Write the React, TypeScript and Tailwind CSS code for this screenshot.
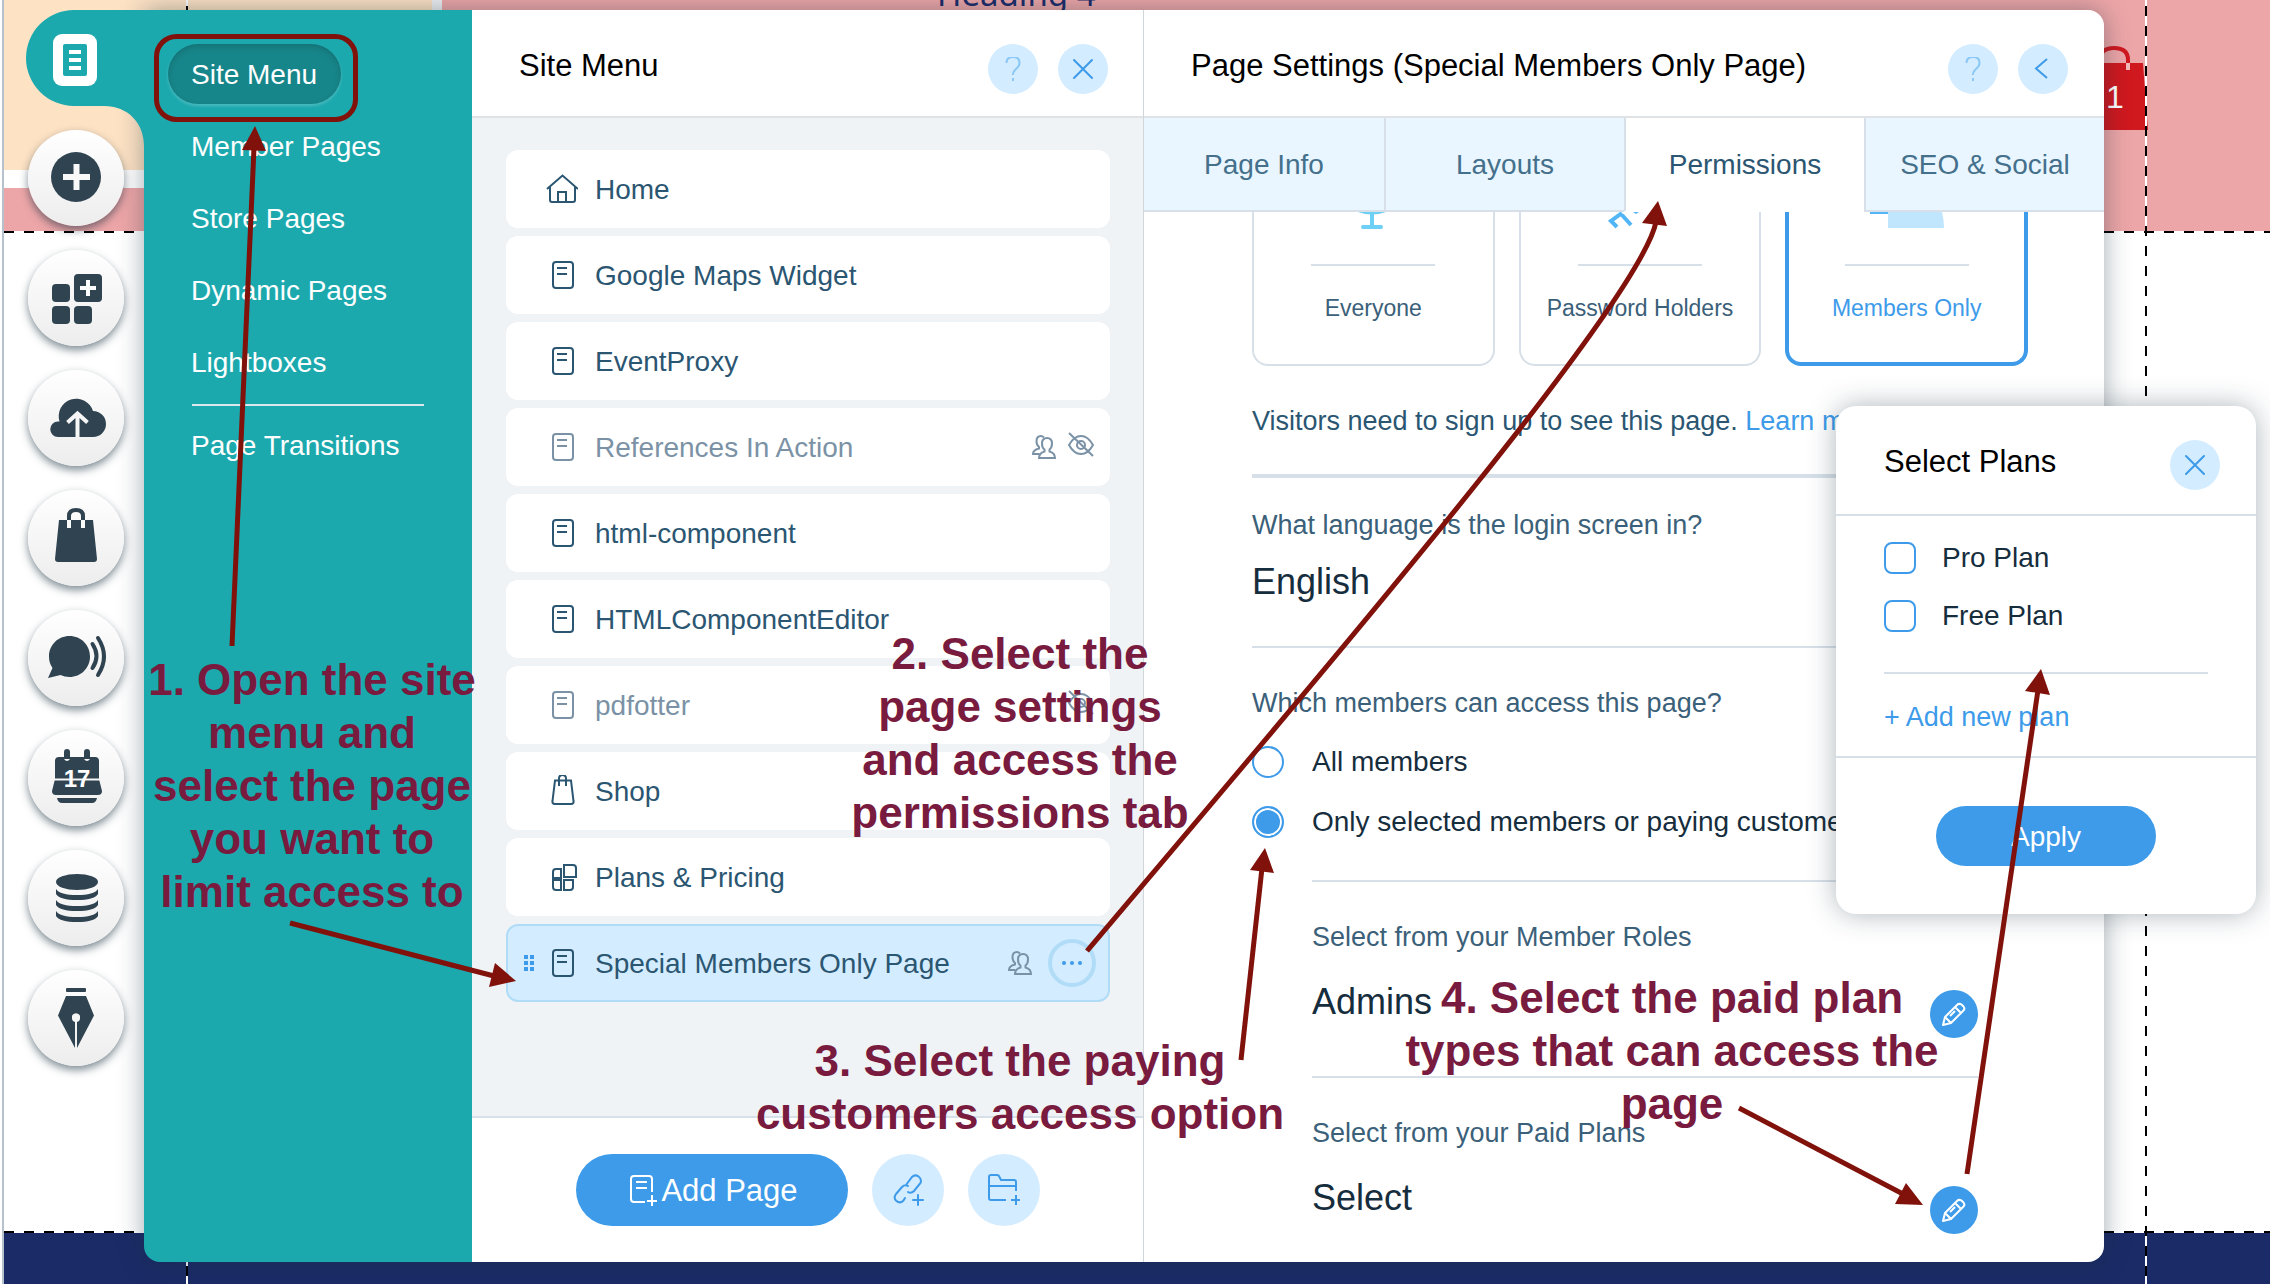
import type { ReactNode } from 'react'
import clsx from 'clsx'

const MENU = ['Site Menu', 'Member Pages', 'Store Pages', 'Dynamic Pages', 'Lightboxes']

type IconName = 'home' | 'page' | 'bag' | 'apps'

interface PageItem {
  title: string
  icon: IconName
  members?: boolean
  hidden?: boolean
  selected?: boolean
}

const PAGES: PageItem[] = [
  { title: 'Home', icon: 'home' },
  { title: 'Google Maps Widget', icon: 'page' },
  { title: 'EventProxy', icon: 'page' },
  { title: 'References In Action', icon: 'page', members: true, hidden: true },
  { title: 'html-component', icon: 'page' },
  { title: 'HTMLComponentEditor', icon: 'page' },
  { title: 'pdfotter', icon: 'page', hidden: true },
  { title: 'Shop', icon: 'bag' },
  { title: 'Plans & Pricing', icon: 'apps' },
  { title: 'Special Members Only Page', icon: 'page', members: true, selected: true },
]

const TABS = ['Page Info', 'Layouts', 'Permissions', 'SEO & Social']

/* ---------- icons ---------- */

const RAIL: { label: string; icon: ReactNode }[] = [
  {
    label: 'Add',
    icon: (
      <>
        <circle cx="48" cy="47" r="25" />
        <path d="M48.5 34v26M35 47h27" stroke="#f8f8f8" strokeWidth="6" />
      </>
    ),
  },
  {
    label: 'Apps',
    icon: (
      <>
        <rect x="24" y="34" width="18" height="18" rx="4" />
        <rect x="46" y="24" width="28" height="28" rx="4" />
        <rect x="24" y="56" width="18" height="18" rx="4" />
        <rect x="46" y="56" width="18" height="18" rx="4" />
        <path d="M60 30v16M52 38h16" stroke="#fff" strokeWidth="4" />
      </>
    ),
  },
  {
    label: 'Media',
    icon: (
      <>
        <path d="M30 67a7.500 7.500 0 0 1 0-15.500h1.500a17.500 17.500 0 1 1 33.500-10.500a13 13 0 0 1 0 26z" />
        <path d="M49.500 67V45M39.500 52.500l10-9 10 9" fill="none" stroke="#f6f6f6" strokeWidth="4" />
      </>
    ),
  },
  {
    label: 'Store',
    icon: (
      <>
        <path d="M31 30h34l4 39q0 3-3 3H30q-3 0-3-3z" />
        <path d="M41 30v-4q0-6 7-6t7 6v4" fill="none" stroke="#2f4351" strokeWidth="4" />
        <path d="M41 30v8M55 30v8" stroke="#fafafa" strokeWidth="4" />
      </>
    ),
  },
  {
    label: 'Chat',
    icon: (
      <>
        <path d="M41.500 26C53 26 62 35 62 46.500S53 67 41.500 67q-5 0-9-2L20 68l4.500-10A20 20 0 0 1 21 46.500C21 35 30 26 41.500 26z" />
        <path d="M64.500 34q8 12 0 24M70 28q12 18.500 0 37" fill="none" stroke="#2f4351" strokeWidth="4" strokeLinecap="round" />
      </>
    ),
  },
  {
    label: 'Events',
    icon: (
      <>
        <path d="M31 27h36q4 0 4 4v18l3 12q0 4-4 4H28q-4 0-4-4l3-12V31q0-4 4-4z" />
        <path d="M29 68h40q-1 5-5 5H34q-4 0-5-5z" />
        <path d="M39 22v5M59 22v5" stroke="#2f4351" strokeWidth="6" strokeLinecap="round" />
        <path d="M36 29q3 4 6 0zM56 29q3 4 6 0z" fill="#f8f8f8" />
        <path d="M26 49.500h46" stroke="#f6f6f6" strokeWidth="2" />
        <text x="49" y="57" textAnchor="middle" fontSize="24" fontWeight="700" fill="#fff">17</text>
      </>
    ),
  },
  {
    label: 'Database',
    icon: (
      <>
        <ellipse cx="49" cy="32" rx="21" ry="8" />
        <path d="M28 39q4 6 21 6t21-6v5q-4 6-21 6t-21-6z" />
        <path d="M28 50q4 6 21 6t21-6v5q-4 6-21 6t-21-6z" />
        <path d="M28 61q4 6 21 6t21-6v5q-4 6-21 6t-21-6z" />
      </>
    ),
  },
  {
    label: 'Blog',
    icon: (
      <>
        <rect x="38" y="18" width="20" height="4" rx="1" />
        <path d="M38 26h20l8 19.500L49 78V51a4 4 0 1 0-2 0v27L30 45.500z" />
        <circle cx="48" cy="48" r="4" fill="#f6f6f6" />
      </>
    ),
  },
]

function PageIcon({ name }: { name: IconName }) {
  return (
    <svg viewBox="0 0 32 32" className="size-8" fill="none" stroke="currentColor" strokeWidth="2" aria-hidden="true">
      {name === 'home' && <path d="M1 16 16.500 2.500 32 16M4 14v13q0 2 2 2h21q2 0 2-2V14M12 29V19h8v10" />}
      {name === 'page' && (
        <>
          <rect x="7" y="3" width="20" height="26" rx="3" />
          <path d="M11 9h10M11 15h10" />
        </>
      )}
      {name === 'bag' && (
        <path d="M9 5.500h16l2.500 20.500q.500 3-2.500 3H9q-3 0-2.500-3zM13 11V3.500q0-3.500 3.500-3.500T20 3.500V11" />
      )}
      {name === 'apps' && (
        <path d="M18 4h9q3 0 3 3v9H18zM7 17V11q0-3 3-3h5v9zM7 19h8v10h-5q-3 0-3-3zM18 19h9v7q0 3-3 3h-6z" />
      )}
    </svg>
  )
}

function MembersIcon() {
  return (
    <svg viewBox="0 0 24 24" className="size-6" fill="none" stroke="currentColor" strokeWidth="2" aria-label="Members only">
      <path d="M12.500 14.500C10 13 10 11 10 8.500 10 5 12 3 15 3s5 2 5 5.500c0 2.500-.500 4.500-2.500 6v2c3.500 1 5.500 2.500 5.500 6.500H7c0-4 2-5.500 5.500-6.500z" />
      <path d="M12 2.500C10.500 1 9.500 1 9 1 6 1 4.500 3 4.500 6c0 2.500.500 4.500 2.500 6v1.500C3 14.500 1 16 1 19h6.500" />
    </svg>
  )
}

function HiddenIcon() {
  return (
    <svg viewBox="0 0 26 26" className="size-[26px]" fill="none" stroke="currentColor" strokeWidth="2" aria-label="Hidden page">
      <path d="M1 13q5-9 12-9t12 9q-5 9-12 9T1 13z" />
      <circle cx="13" cy="13" r="4" />
      <path d="M1 1l24 23" />
    </svg>
  )
}

function PencilIcon() {
  return (
    <svg viewBox="0 0 24 24" className="size-6" fill="none" stroke="currentColor" strokeWidth="2" strokeLinejoin="round" aria-hidden="true">
      <path d="M1 23l2-8L15 3q2-2 4.500-.500l2 2Q23.500 7 21 9L9 21zM3 15l6 6M13 5l6 6M8 14l5-5" />
    </svg>
  )
}

function RoundButton({ kind }: { kind: 'help' | 'close' | 'back' }) {
  const label = { help: 'Help', close: 'Close', back: 'Back' }[kind]
  return (
    <button
      aria-label={label}
      className={clsx(
        'flex size-[50px] shrink-0 items-center justify-center rounded-full bg-[#d3ecff]',
        kind === 'help' ? 'text-[#8bc8f6]' : 'text-[#3d9be9]',
      )}
    >
      <svg viewBox="0 0 24 24" className="size-6" fill="none" stroke="currentColor" strokeWidth="2" aria-hidden="true">
        {kind === 'help' && <path d="M5.500 6Q5.500 0 12 0t6.500 6q0 3-3.500 6t-3 6M12 21v3" />}
        {kind === 'close' && <path d="M3 3l18 18M21 3L3 21" strokeLinecap="round" />}
        {kind === 'back' && <path d="M16 2L5 11.500l11 9.500" />}
      </svg>
    </button>
  )
}

/* ---------- site behind the panels ---------- */

function SiteCanvas() {
  return (
    <div className="absolute inset-0 flex flex-col overflow-hidden border-l-2 border-white bg-white" aria-hidden="true">
      <div className="flex h-[231px] bg-[#eda6a8]">
        <div className="flex w-[430px] flex-col">
          <div className="h-[170px] bg-[#fde2c4]" />
          <div className="h-[18px] bg-white" />
        </div>
        <div className="w-[10px] bg-[#eef0f2]" />
        <p className="pl-[495px] font-['Noto_Sans','Open_Sans',sans-serif] text-[33px] leading-[44px] text-[#1b2a68] -mt-[28px]">
          Heading 4
        </p>
      </div>
      <div className="h-[2px] bg-[repeating-linear-gradient(90deg,transparent_0_2px,#000_2px_12px,transparent_12px_20px)]" />
      <div className="flex-1" />
      <div className="h-[2px] bg-[repeating-linear-gradient(90deg,transparent_0_2px,#000_2px_12px,transparent_12px_20px)]" />
      <div className="h-[51px] bg-[#1b2b67]" />
      <div className="absolute inset-y-0 left-0 w-[2px] bg-[#b6c1cc]" />
      <div className="absolute inset-y-0 left-[184px] w-[2px] bg-[repeating-linear-gradient(180deg,#fff_0_6px,#000_6px_16px,#fff_16px_20px)]" />
      <svg viewBox="0 0 60 90" className="absolute right-[122px] top-[44px] h-[90px] w-[60px]">
        <path d="M9 19h46l5 67H0z" fill="#d0181f" />
        <path d="M12 24V16Q12 4 26 4t14 12v3" fill="none" stroke="#d0181f" strokeWidth="4" />
        <path d="M40 19v7" stroke="#f3b9ba" strokeWidth="4" />
        <text x="18" y="64" fontSize="32" fill="#fff">1</text>
      </svg>
      <div className="absolute inset-y-0 right-[123px] w-[2px] bg-[repeating-linear-gradient(180deg,#fff_0_6px,#000_6px_16px,#fff_16px_20px)]" />
    </div>
  )
}

/* ---------- tool rail ---------- */

function ToolRail() {
  return (
    <nav className="relative z-10 flex w-[144px] shrink-0 flex-col gap-6" aria-label="Editor tools">
      <button className="ml-[26px] h-24" aria-label="Menus and pages">
        <svg viewBox="0 0 118 96" className="h-24 w-full overflow-visible">
          <path d="M118 0H48a48 48 0 0 0 0 96h30c24 0 40 17 40 40z" fill="#1ca9ae" />
          <rect x="27" y="24" width="44" height="52" rx="9" fill="#fff" />
          <rect x="37" y="34" width="24" height="32" rx="2" fill="#1ca9ae" />
          <path d="M43 42h12M43 50h12M43 58h12" stroke="#fff" strokeWidth="4" />
        </svg>
      </button>
      {RAIL.map((tool) => (
        <button
          key={tool.label}
          aria-label={tool.label}
          className="ml-[28px] size-24 rounded-full bg-linear-to-b from-white to-[#ededed] shadow-[0_4px_8px_rgba(22,45,61,0.55)]"
        >
          <svg viewBox="0 0 96 96" className="size-24 fill-[#2f4351]">{tool.icon}</svg>
        </button>
      ))}
    </nav>
  )
}

/* ---------- left menu ---------- */

function SideMenu() {
  return (
    <nav className="flex w-[328px] shrink-0 flex-col gap-3 rounded-bl-2xl bg-[#1ca9ae] px-6 pt-[34px] text-[28px] text-white">
      {MENU.map((item, i) => (
        <button
          key={item}
          className={clsx(
            'h-[60px] self-start rounded-full pl-[23px] pr-6 pt-[2px] whitespace-nowrap',
            i === 0 && 'bg-[#17868a] shadow-[inset_0_3px_6px_rgba(0,0,0,0.15),0_2px_3px_rgba(255,255,255,0.2)]',
          )}
        >
          {item}
        </button>
      ))}
      <hr className="mx-6 border-t-2 border-[#dbe9ee]" />
      <button className="-mt-[2px] h-[60px] self-start pl-[23px] pr-6 whitespace-nowrap">Page Transitions</button>
    </nav>
  )
}

/* ---------- page list ---------- */

function PageRow({ page }: { page: PageItem }) {
  return (
    <li
      className={clsx(
        'flex h-[78px] items-center rounded-xl border-2 pr-3',
        page.selected ? 'border-[#b0dcf7] bg-[#d3ecff]' : 'border-white bg-white',
        page.hidden ? 'text-[#7b92a6]' : 'text-[#2b5672]',
      )}
    >
      <span className="flex w-[38px] justify-center pl-1">
        {page.selected && (
          <svg viewBox="0 0 10 16" className="h-4 w-[10px] fill-[#3d9be9]" aria-hidden="true">
            <path d="M0 0h4v4H0zM6 0h4v4H6zM0 6h4v4H0zM6 6h4v4H6zM0 12h4v4H0zM6 12h4v4H6z" />
          </svg>
        )}
      </span>
      <button className="flex flex-1 items-center gap-[17px] text-left text-[28px] whitespace-nowrap">
        <PageIcon name={page.icon} />
        <span className="pt-[2px]">{page.title}</span>
      </button>
      <span className={clsx('flex items-center', page.selected ? 'gap-4' : 'gap-3', 'text-[#7b92a6]')}>
        {page.members && <MembersIcon />}
        {page.hidden && <span className="pb-1 pr-[2px]"><HiddenIcon /></span>}
        {page.selected && (
          <button aria-label="More actions" className="flex size-12 items-center justify-center rounded-full border-4 border-[#b0dcf7]">
            <svg viewBox="0 0 20 4" className="h-1 w-5 fill-[#3d9be9]">
              <circle cx="2" cy="2" r="2" />
              <circle cx="10" cy="2" r="2" />
              <circle cx="18" cy="2" r="2" />
            </svg>
          </button>
        )}
      </span>
    </li>
  )
}

function SiteMenuPanel() {
  return (
    <section className="flex w-[671px] shrink-0 flex-col bg-white">
      <header className="flex h-[108px] items-start gap-5 border-b-2 border-[#dfe3e6] pl-[47px] pr-[35px] pt-[34px]">
        <h2 className="flex-1 text-[31px] leading-[44px] text-black">Site Menu</h2>
        <RoundButton kind="help" />
        <RoundButton kind="close" />
      </header>
      <ul className="flex flex-1 flex-col gap-2 bg-[#eff3f6] pl-[34px] pr-[33px] pt-8">
        {PAGES.map((page) => (
          <PageRow key={page.title} page={page} />
        ))}
      </ul>
      <footer className="flex h-[146px] items-center justify-center gap-6 border-t-2 border-[#d7e0e8]">
        <button className="flex h-[72px] w-[272px] items-center justify-center gap-1 rounded-full bg-[#3d9be9] pl-1 pt-[2px] text-[31px] text-white">
          <svg viewBox="0 0 28 32" className="h-8 w-7" fill="none" stroke="currentColor" strokeWidth="2" aria-hidden="true">
            <path d="M23 17V4q0-3-3-3H5Q2 1 2 4v20q0 3 3 3h11M7 7h11M7 13h11M23 20v11M18 26h10" />
          </svg>
          Add Page
        </button>
        <button aria-label="Add link" className="flex size-[72px] items-center justify-center rounded-full bg-[#d3ecff] text-[#3d9be9]">
          <svg viewBox="0 0 32 32" className="size-8" fill="none" stroke="currentColor" strokeWidth="2" strokeLinecap="round">
            <path d="M14 11l6-8q3-3 6.500-.500T28.500 9L22 17q-3 3-6 1M16 12q-3-2-6 1L4 20q-3 4 .500 7t7-.500L13 24" />
            <path d="M26 21v10M21 26h10" />
          </svg>
        </button>
        <button aria-label="Add folder" className="flex size-[72px] items-center justify-center rounded-full bg-[#d3ecff] text-[#3d9be9]">
          <svg viewBox="0 0 32 32" className="size-8" fill="none" stroke="currentColor" strokeWidth="2">
            <path d="M28 17V8q0-2-2-2H13l-2-4Q10 1 9 1H3Q1 1 1 3v21q0 2 2 2h15M1 12h27M28 21v10M23 26h10" />
          </svg>
        </button>
      </footer>
    </section>
  )
}

/* ---------- page settings ---------- */

function AccessCard({ label, active, children }: { label: string; active?: boolean; children: ReactNode }) {
  return (
    <button
      className={clsx(
        'flex h-[154px] flex-col items-center justify-start rounded-b-2xl text-[23px] leading-7',
        active ? 'border-x-4 border-b-4 border-[#3d9be9] text-[#3d9be9]' : 'border-x-2 border-b-2 border-[#d7e0e8] text-[#3b6079]',
      )}
    >
      <svg viewBox="0 0 90 17" className="h-[17px] w-[90px]" aria-hidden="true">{children}</svg>
      <span className="mt-[35px] h-[2px] w-[124px] bg-[#d7e0e8]" />
      <span className="mt-7 whitespace-nowrap">{label}</span>
    </button>
  )
}

function ValueRow({ label, value }: { label: string; value: string }) {
  return (
    <>
      <p className="mt-[39px] text-[27px] leading-8 text-[#3b6079]">{label}</p>
      <div className="mt-[27px] flex h-[58px] justify-between">
        <span className="text-[36px] leading-[44px] text-[#162d3d]">{value}</span>
        <button aria-label={`Edit: ${label}`} className="flex size-12 items-center justify-center self-end rounded-full bg-[#3d9be9] text-white">
          <PencilIcon />
        </button>
      </div>
    </>
  )
}

function Radio({ label, checked }: { label: string; checked?: boolean }) {
  return (
    <label className="flex h-8 items-center gap-7 text-[28px] whitespace-nowrap text-[#162d3d]">
      <input
        type="radio"
        name="access"
        defaultChecked={checked}
        className="size-8 shrink-0 appearance-none rounded-full border-2 border-[#3d9be9] bg-white checked:bg-[#3d9be9] checked:shadow-[inset_0_0_0_2px_#fff]"
      />
      {label}
    </label>
  )
}

function SettingsPanel() {
  return (
    <section className="flex min-w-0 flex-1 flex-col overflow-hidden rounded-r-2xl border-l border-[#d0d6da] bg-white">
      <header className="flex h-[108px] items-start gap-5 border-b-2 border-[#dfe3e6] pl-[47px] pr-9 pt-[34px]">
        <h2 className="flex-1 text-[31px] leading-[44px] whitespace-nowrap text-black">Page Settings (Special Members Only Page)</h2>
        <RoundButton kind="help" />
        <RoundButton kind="back" />
      </header>
      <div className="grid grid-cols-4" role="tablist">
        {TABS.map((tab, i) => {
          const active = tab === 'Permissions'
          return (
            <button
              key={tab}
              role="tab"
              aria-selected={active}
              className={clsx(
                'h-[94px] border-b-2 pt-[2px] text-[28px] whitespace-nowrap',
                active ? 'border-b-white bg-white text-[#2b5672]' : 'border-b-[#d7e0e8] bg-[#e9f6ff] text-[#44708c]',
                i > 0 && 'border-l-2 border-l-[#d7e0e8]',
              )}
            >
              {tab}
            </button>
          )
        })}
      </div>

      <div className="pb-7 pl-[108px] pr-[126px]">
        <div className="-mr-[50px] grid grid-cols-3 gap-6">
          <AccessCard label="Everyone">
            <path d="M30 0q14 5 28 0z" fill="#6fd0f6" />
            <path d="M44 0v15M35 15h18" stroke="#6fd0f6" strokeWidth="4" strokeLinecap="round" />
          </AccessCard>
          <AccessCard label="Password Holders">
            <path d="M22 15l-6-6L27 1M27 3l9 10" fill="none" stroke="#52b6f6" strokeWidth="4" />
            <path d="M38 0h6l-3 2z" fill="#52b6f6" />
          </AccessCard>
          <AccessCard label="Members Only" active>
            <path d="M8 0h20v2H8z" fill="#52b6f6" />
            <path d="M26 0h54q2 8 2 16H26z" fill="#bfe6fd" />
          </AccessCard>
        </div>
        <p className="mt-[39px] text-[27px] leading-8 whitespace-nowrap text-[#2b5672]">
          Visitors need to sign up to see this page. <a href="#learn" className="text-[#3d9be9]">Learn more</a>
        </p>
        <hr className="mt-[37px] border-t-4 border-[#d7e0e8]" />

        <label htmlFor="language" className="mt-[31px] block text-[27px] leading-8 text-[#3b6079]">
          What language is the login screen in?
        </label>
        <select id="language" className="mt-[19px] block h-[44px] w-full appearance-none text-[36px] leading-[44px] text-[#162d3d]">
          <option>English</option>
        </select>
        <hr className="mt-[42px] border-t-2 border-[#d7e0e8]" />

        <fieldset className="mt-[39px]">
          <legend className="text-[27px] leading-8 text-[#3b6079]">Which members can access this page?</legend>
          <div className="mt-[27px] flex flex-col gap-7">
            <Radio label="All members" />
            <Radio label="Only selected members or paying customers" checked />
          </div>
        </fieldset>

        <div className="pl-[60px]">
          <hr className="mt-[42px] border-t-2 border-[#d7e0e8]" />
          <ValueRow label="Select from your Member Roles" value="Admins" />
          <hr className="mt-[38px] border-t-2 border-[#d7e0e8]" />
          <ValueRow label="Select from your Paid Plans" value="Select" />
        </div>
      </div>
    </section>
  )
}

/* ---------- plans dialog ---------- */

function PlansDialog() {
  return (
    <div
      role="dialog"
      aria-label="Select Plans"
      className="absolute right-[14px] top-[406px] z-20 flex w-[420px] flex-col rounded-[20px] bg-white pb-12 shadow-[0_0_28px_rgba(22,45,61,0.35)]"
    >
      <header className="flex h-[110px] items-start border-b-2 border-[#d7e0e8] pl-12 pr-9 pt-[34px]">
        <h2 className="flex-1 text-[31px] leading-[44px] text-black">Select Plans</h2>
        <RoundButton kind="close" />
      </header>
      <div className="flex flex-col border-b-2 border-[#d7e0e8] px-12 pb-[23px] pt-[26px]">
        <div className="flex flex-col gap-[26px]">
          {['Pro Plan', 'Free Plan'].map((plan) => (
            <label key={plan} className="flex h-8 items-center gap-[26px] text-[28px] text-[#162d3d]">
              <input type="checkbox" className="size-8 appearance-none rounded-lg border-2 border-[#3d9be9] bg-white checked:bg-[#3d9be9]" />
              {plan}
            </label>
          ))}
        </div>
        <hr className="mt-10 border-t-2 border-[#d7e0e8]" />
        <a href="#new-plan" className="mt-[27px] text-[27px] leading-8 text-[#3d9be9]">+ Add new plan</a>
      </div>
      <button className="mt-12 h-[60px] w-[220px] self-center rounded-full bg-[#3d9be9] pt-[2px] text-[28px] text-white">Apply</button>
    </div>
  )
}

/* ---------- tutorial notes ---------- */

function Notes() {
  const note = 'absolute -translate-x-1/2 text-center text-[44px] leading-[53px] font-bold whitespace-nowrap text-[#781b3e]'
  return (
    <div className="pointer-events-none absolute inset-0 z-30 overflow-hidden">
      <p className={clsx(note, 'left-[312px] top-[653px]')}>
        1. Open the site<br />menu and<br />select the page<br />you want to<br />limit access to
      </p>
      <p className={clsx(note, 'left-[1020px] top-[627px]')}>
        2. Select the<br />page settings<br />and access the<br />permissions tab
      </p>
      <p className={clsx(note, 'left-[1020px] top-[1034px]')}>
        3. Select the paying<br />customers access option
      </p>
      <p className={clsx(note, 'left-[1672px] top-[971px]')}>
        4. Select the paid plan<br />types that can access the<br />page
      </p>
      <svg viewBox="0 0 2270 1284" className="absolute left-0 top-0 h-[1284px] w-[2270px]" aria-hidden="true">
        <rect x="156.500" y="36.500" width="199" height="83" rx="20" fill="none" stroke="#80120b" strokeWidth="5" />
        <g fill="none" stroke="#80120b" strokeWidth="5">
          <path d="M232 646L254 148" />
          <path d="M290 923L494 976" />
          <path d="M1087 951C1350 640 1640 300 1656 222" />
          <path d="M1241 1060L1262 868" />
          <path d="M1739 1108L1903 1194" />
          <path d="M1967 1174L2038 690" />
        </g>
        <g fill="#80120b">
          <path d="M255 126l11 25-24-1z" />
          <path d="M516 981l-27 6 6-24z" />
          <path d="M1658 201l9 25-25-3z" />
          <path d="M1265 848l9 25-24-3z" />
          <path d="M1923 1205l-28-1 11-21z" />
          <path d="M2041 669l9 26-25-4z" />
        </g>
      </svg>
    </div>
  )
}

export default function App() {
  return (
    <div className="relative flex min-h-screen overflow-hidden bg-white pb-[22px] pr-[166px] pt-[10px] font-['Liberation_Sans',Arial,sans-serif]">
      <SiteCanvas />
      <ToolRail />
      <main className="relative flex min-w-0 flex-1 rounded-2xl rounded-tl-none shadow-[0_0_26px_rgba(22,45,61,0.4)]">
        <SideMenu />
        <SiteMenuPanel />
        <SettingsPanel />
      </main>
      <PlansDialog />
      <Notes />
    </div>
  )
}
